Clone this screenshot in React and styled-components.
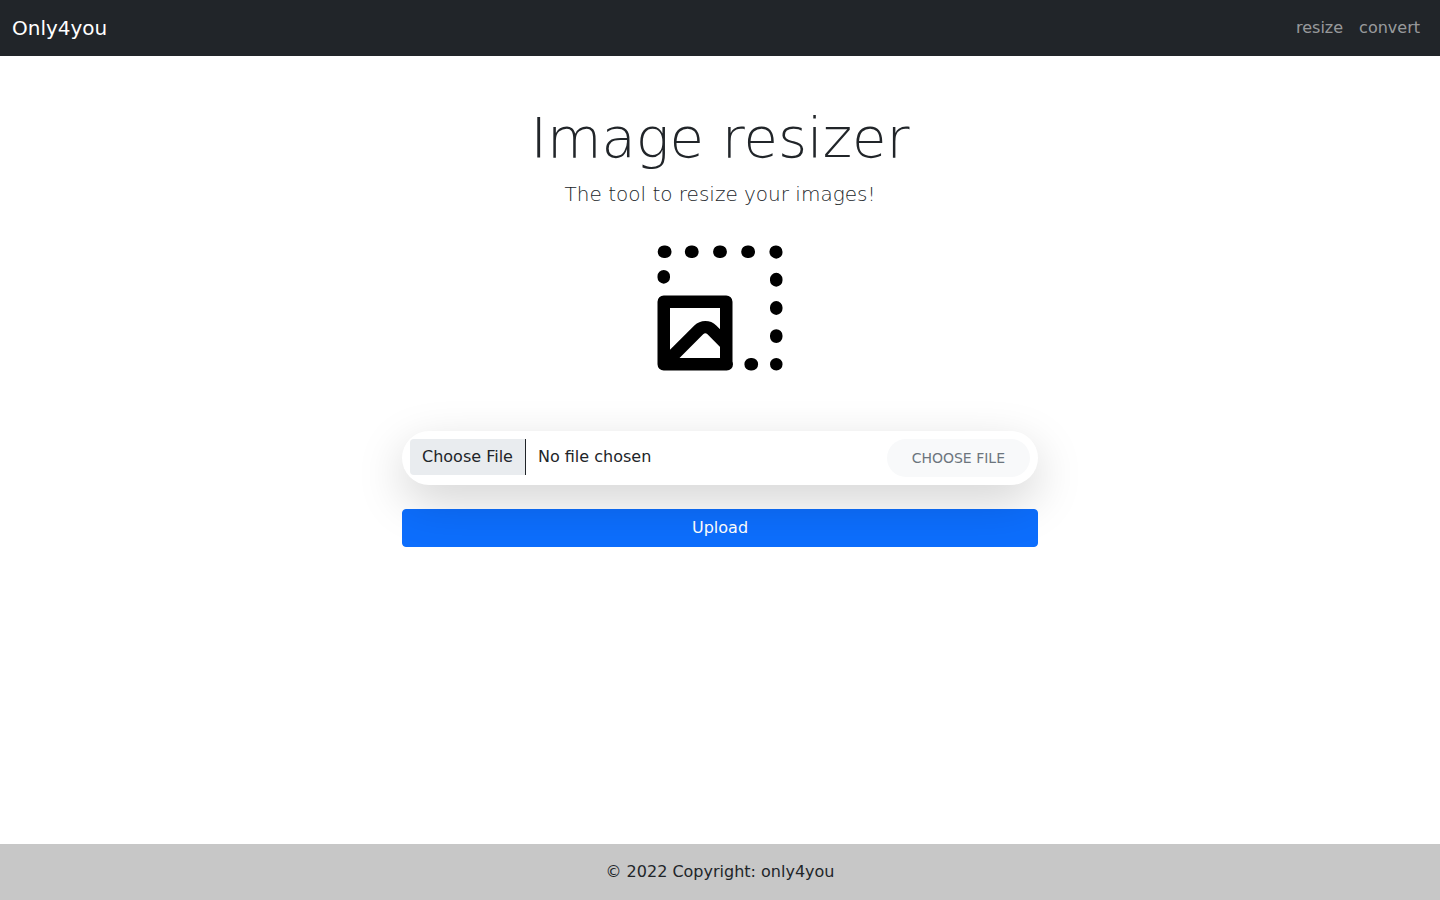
import React from "react";
import styled, { createGlobalStyle } from "styled-components";

const GlobalStyle = createGlobalStyle`
  *, *::before, *::after { box-sizing: border-box; }
  body {
    margin: 0;
    background: #fff;
    color: #212529;
    font-family: "DejaVu Sans", sans-serif;
    font-size: 16px;
    line-height: 1.5;
  }
`;

const Page = styled.div`
  display: flex;
  flex-direction: column;
  min-height: 100vh;
`;

const Navbar = styled.nav`
  display: flex;
  align-items: center;
  justify-content: space-between;
  height: 56px;
  padding: 8px 12px;
  background: #212529;
`;

const Brand = styled.a`
  color: #fff;
  font-size: 20px;
  text-decoration: none;
`;

const NavLinks = styled.div`
  display: flex;
`;

const NavLink = styled.a`
  padding: 8px;
  color: rgba(255, 255, 255, 0.55);
  text-decoration: none;
`;

const Main = styled.main`
  display: flex;
  flex: 1;
  flex-direction: column;
  align-items: center;
  padding-top: 48px;
`;

const Title = styled.h1`
  margin: 0 0 8px;
  font-size: 56px;
  font-weight: 300;
  line-height: 1.2;
`;

const Lead = styled.p`
  margin: 0 0 23.8px;
  font-size: 20px;
  font-weight: 300;
`;

const ResizeSvg = styled.svg`
  display: block;
  width: 150px;
  height: 150px;
  margin-bottom: 48px;
`;

const Form = styled.form`
  width: 636px;
`;

const FileGroup = styled.div`
  position: relative;
  display: flex;
  align-items: flex-start;
  height: 54px;
  margin-bottom: 24px;
  padding: 8px;
  border-radius: 27px;
  background: #fff;
  box-shadow: 0 16px 48px rgba(0, 0, 0, 0.175);
`;

const PickerButton = styled.button`
  height: 36px;
  padding: 6px 12px;
  border: 0 solid #212529;
  border-right-width: 1px;
  border-radius: 4px 0 0 4px;
  background: #e9ecef;
  color: #212529;
  font: inherit;
  line-height: 24px;
`;

const FileName = styled.span`
  flex: 1;
  padding: 6px 12px;
  line-height: 24px;
`;

const PillButton = styled.label`
  height: 38px;
  padding: 0 25px;
  border-radius: 19px;
  background: #f8f9fa;
  color: #6c757d;
  font-size: 14px;
  line-height: 38px;
  text-transform: uppercase;
`;

const UploadButton = styled.button`
  display: block;
  width: 100%;
  height: 38px;
  padding: 6px 12px;
  border: 1px solid #0d6efd;
  border-radius: 4px;
  background: #0d6efd;
  color: #fff;
  font: inherit;
  line-height: 24px;
`;

const Footer = styled.footer`
  height: 56px;
  padding: 16px;
  background: #c7c7c7;
  text-align: center;
`;

function ResizeIcon() {
  return (
    <ResizeSvg
      viewBox="0 0 24 24"
      fill="none"
      stroke="#000"
      strokeWidth="2"
      strokeLinecap="round"
      strokeLinejoin="round"
      aria-hidden="true"
    >
      <path d="M3 11h10v10H3zM3.1 21l5.5-5.5a1.5 1.5 0 0 1 2.1 0L13 17.8M13.05 21h.03" />
      <path d="M3.03 3h.22M7.37 3h.22M11.89 3h.22M16.39 3h.22M20.9 3h.1v.1" />
      <path d="M3 6.9v.2M21 7.37v.22M21 11.89v.22M21 16.39v.22M21 21h.01M16.9 21h.2" />
    </ResizeSvg>
  );
}

export default function App() {
  return (
    <Page>
      <GlobalStyle />
      <Navbar>
        <Brand>Only4you</Brand>
        <NavLinks>
          <NavLink>resize</NavLink>
          <NavLink>convert</NavLink>
        </NavLinks>
      </Navbar>
      <Main>
        <Title>Image resizer</Title>
        <Lead>The tool to resize your images!</Lead>
        <ResizeIcon />
        <Form>
          <FileGroup>
            <PickerButton type="button">Choose File</PickerButton>
            <FileName>No file chosen</FileName>
            <PillButton>Choose file</PillButton>
          </FileGroup>
          <UploadButton type="button">Upload</UploadButton>
        </Form>
      </Main>
      <Footer>© 2022 Copyright: only4you</Footer>
    </Page>
  );
}
